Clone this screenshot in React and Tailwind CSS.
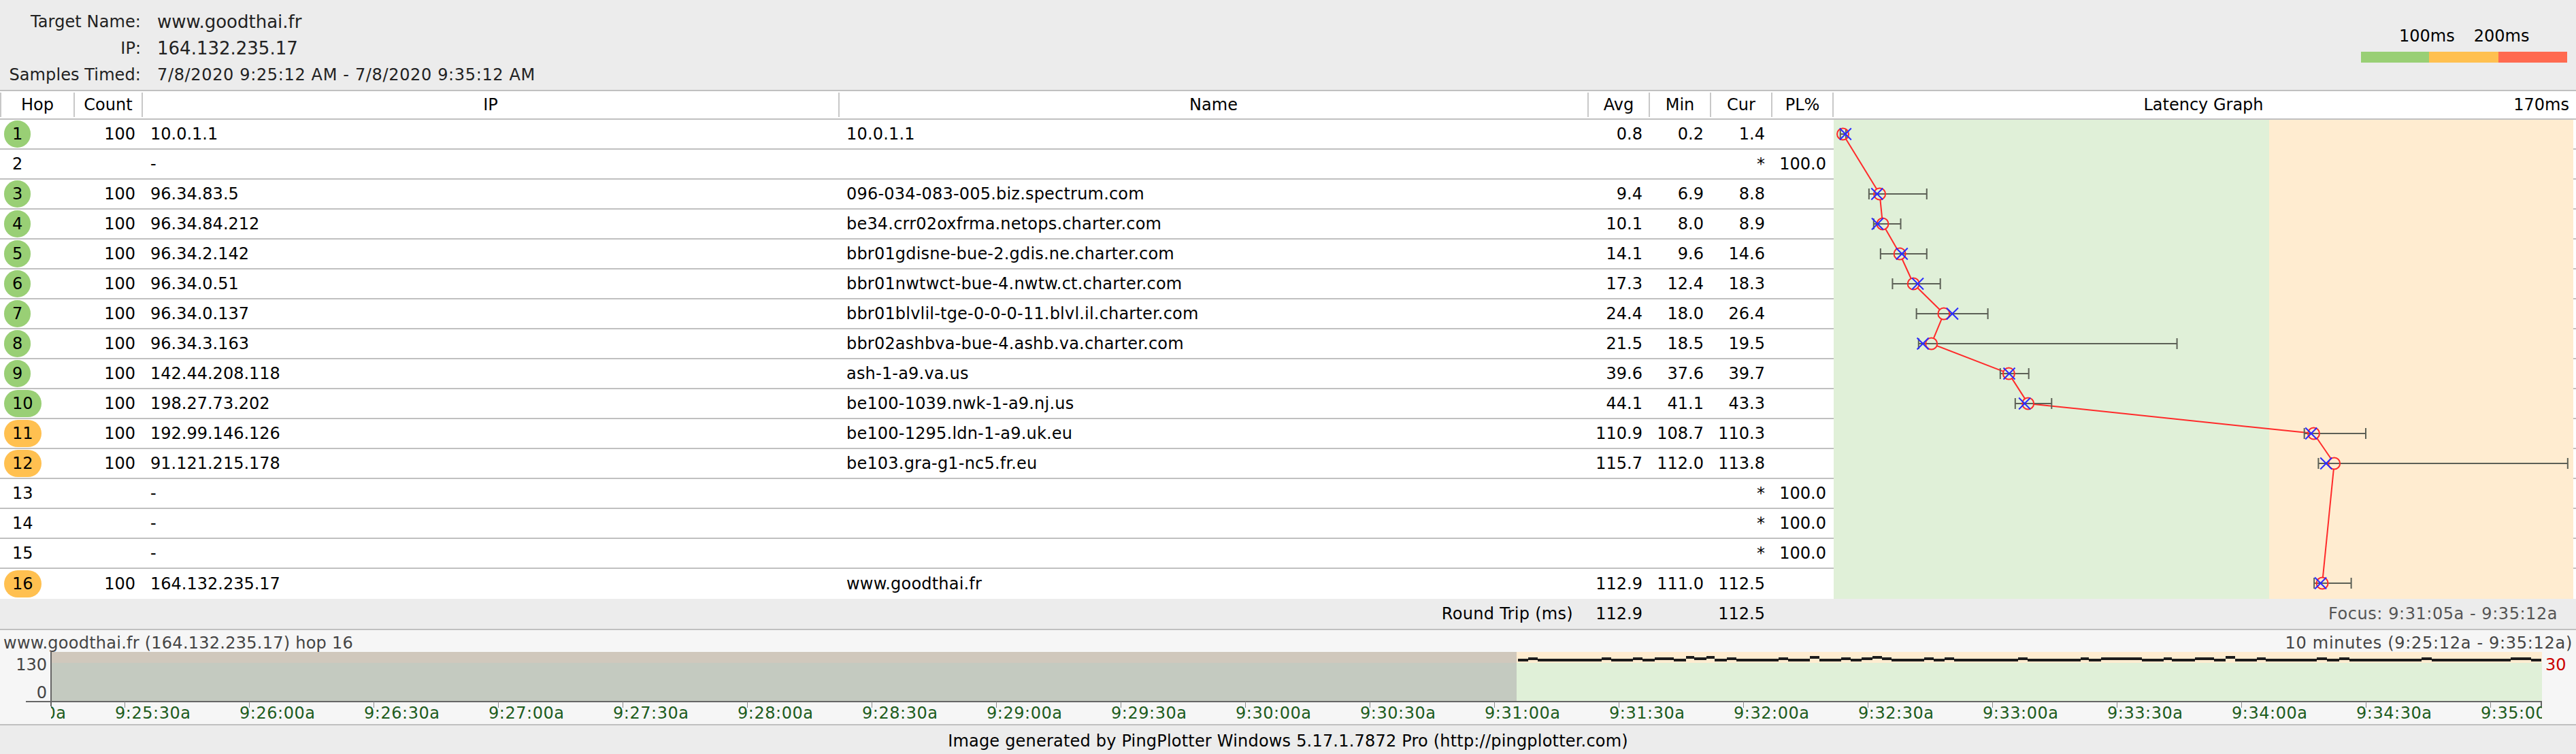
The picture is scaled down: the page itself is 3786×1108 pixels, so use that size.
import React from 'react';

const hops = [
    { hop: 1, count: 100, ip: '10.0.1.1', name: '10.0.1.1', avg: 0.8, min: 0.2, cur: 1.4, max: 1.5, tone: 'green' },
    { hop: 2, ip: '-', cur: '*', pl: '100.0' },
    { hop: 3, count: 100, ip: '96.34.83.5', name: '096-034-083-005.biz.spectrum.com', avg: 9.4, min: 6.9, cur: 8.8, max: 20.41, tone: 'green' },
    { hop: 4, count: 100, ip: '96.34.84.212', name: 'be34.crr02oxfrma.netops.charter.com', avg: 10.1, min: 8.0, cur: 8.9, max: 14.32, tone: 'green' },
    { hop: 5, count: 100, ip: '96.34.2.142', name: 'bbr01gdisne-bue-2.gdis.ne.charter.com', avg: 14.1, min: 9.6, cur: 14.6, max: 20.41, tone: 'green' },
    { hop: 6, count: 100, ip: '96.34.0.51', name: 'bbr01nwtwct-bue-4.nwtw.ct.charter.com', avg: 17.3, min: 12.4, cur: 18.3, max: 23.58, tone: 'green' },
    { hop: 7, count: 100, ip: '96.34.0.137', name: 'bbr01blvlil-tge-0-0-0-11.blvl.il.charter.com', avg: 24.4, min: 18.0, cur: 26.4, max: 34.7, tone: 'green' },
    { hop: 8, count: 100, ip: '96.34.3.163', name: 'bbr02ashbva-bue-4.ashb.va.charter.com', avg: 21.5, min: 18.5, cur: 19.5, max: 78.93, tone: 'green' },
    { hop: 9, count: 100, ip: '142.44.208.118', name: 'ash-1-a9.va.us', avg: 39.6, min: 37.6, cur: 39.7, max: 44.26, tone: 'green' },
    { hop: 10, count: 100, ip: '198.27.73.202', name: 'be100-1039.nwk-1-a9.nj.us', avg: 44.1, min: 41.1, cur: 43.3, max: 49.61, tone: 'green' },
    { hop: 11, count: 100, ip: '192.99.146.126', name: 'be100-1295.ldn-1-a9.uk.eu', avg: 110.9, min: 108.7, cur: 110.3, max: 123.07, tone: 'orange' },
    { hop: 12, count: 100, ip: '91.121.215.178', name: 'be103.gra-g1-nc5.fr.eu', avg: 115.7, min: 112.0, cur: 113.8, max: 170.3, tone: 'orange' },
    { hop: 13, ip: '-', cur: '*', pl: '100.0' },
    { hop: 14, ip: '-', cur: '*', pl: '100.0' },
    { hop: 15, ip: '-', cur: '*', pl: '100.0' },
    { hop: 16, count: 100, ip: '164.132.235.17', name: 'www.goodthai.fr', avg: 112.9, min: 111.0, cur: 112.5, max: 119.67, tone: 'orange' },
];

const timeLabels = [
    '9:25:00a', '9:25:30a', '9:26:00a', '9:26:30a', '9:27:00a', '9:27:30a', '9:28:00a',
    '9:28:30a', '9:29:00a', '9:29:30a', '9:30:00a', '9:30:30a', '9:31:00a', '9:31:30a',
    '9:32:00a', '9:32:30a', '9:33:00a', '9:33:30a', '9:34:00a', '9:34:30a', '9:35:00a',
];

// [x where the step ends, level]: 0 is the base line, 1 and 2 are the raised steps
const trace = [
    [2246, 0], [2260, 1], [2354, 0], [2368, 1], [2400, 0], [2414, 1], [2432, 0], [2460, 1], [2478, 0],
    [2490, 2], [2508, 1], [2520, 2], [2538, 0], [2552, 1], [2614, 0], [2628, 1], [2660, 0], [2674, 2],
    [2706, 0], [2720, 1], [2736, 0], [2752, 1], [2766, 2], [2780, 1], [2828, 0], [2842, 1], [2858, 0],
    [2872, 1], [2966, 0], [2980, 1], [3058, 0], [3070, 1], [3088, 0], [3148, 1], [3180, 0], [3192, 1],
    [3226, 0], [3254, 1], [3271, 0], [3285, 2], [3317, 0], [3330, 1], [3405, 0], [3420, 1], [3438, 0],
    [3453, 1], [3559, 0], [3574, 1], [3690, 0], [3720, 1], [3735, 0],
];

const tracePath = () => {
    let x = 2231;
    return trace
        .map(([end, level]) => {
            const part = `M${x} ${12 - level * 2}H${end}`;
            x = end;
            return part;
        })
        .join('');
};

const latencyX = (ms) => 8.5 + ms * 6.285;
const rowY = (hop) => 21 + (hop - 1) * 44;

function LatencyOverlay() {
    const points = hops.filter((h) => h.avg !== undefined);
    const r = 8.5;

    return (
        <svg className="absolute left-0 top-0" width="1091" height="704">
            {points.slice(1).map((p, i) => {
                const a = points[i];
                const x1 = latencyX(a.avg);
                const y1 = rowY(a.hop);
                const x2 = latencyX(p.avg);
                const y2 = rowY(p.hop);
                const len = Math.hypot(x2 - x1, y2 - y1);
                const ux = (x2 - x1) / len;
                const uy = (y2 - y1) / len;
                return (
                    <line
                        key={p.hop}
                        x1={x1 + ux * r}
                        y1={y1 + uy * r}
                        x2={x2 - ux * r}
                        y2={y2 - uy * r}
                        stroke="#ff2a2a"
                        strokeWidth="2"
                    />
                );
            })}
            {points.map((p) => {
                const y = rowY(p.hop);
                const min = latencyX(p.min);
                const max = latencyX(p.max);
                const cur = latencyX(p.cur);
                return (
                    <g key={p.hop} fill="none">
                        <path d={`M${min} ${y}H${max}M${min} ${y - 8}V${y + 8}M${max} ${y - 8}V${y + 8}`} stroke="#5c6056" strokeWidth="2" />
                        <circle cx={latencyX(p.avg)} cy={y} r={r} stroke="#ff2a2a" strokeWidth="2" />
                        <path d={`M${cur - 8.5} ${y - 8.5}L${cur + 8.5} ${y + 8.5}M${cur + 8.5} ${y - 8.5}L${cur - 8.5} ${y + 8.5}`} stroke="#2a2aff" strokeWidth="2" />
                    </g>
                );
            })}
        </svg>
    );
}

function TimelineChart() {
    return (
        <svg className="block" width="3786" height="106">
            <defs>
                <clipPath id="plot-clip">
                    <rect x="75" y="0" width="3661" height="106" />
                </clipPath>
            </defs>
            <rect x="75" y="0" width="3661" height="16" fill="#ffecd0" />
            <rect x="75" y="16" width="3661" height="56" fill="#e0f0d8" />
            <rect x="75" y="0" width="2154" height="16" fill="#d0c8bc" />
            <rect x="75" y="16" width="2154" height="56" fill="#c4cac0" />
            <path d={tracePath()} fill="none" stroke="#1c1c1c" strokeWidth="4" />
            <path d="M75 0V80M3735 72V80" fill="none" stroke="#666666" strokeWidth="2" />
            <path d="M38 73H3736" fill="none" stroke="#666666" strokeWidth="2" />
            {timeLabels.map((label, i) => (
                <path key={label} d={`M${183 * i + 0.5} 73V82`} stroke="#8a8a8a" strokeWidth="1" clipPath="url(#plot-clip)" />
            ))}
            <g clipPath="url(#plot-clip)" fill="#1d5c1d" fontSize="24">
                {timeLabels.map((label, i) => (
                    <text key={label} x={183 * i - 14} y="98" letterSpacing="0.55">
                        {label}
                    </text>
                ))}
            </g>
            <text x="69" y="27" textAnchor="end" fontSize="24" fill="#444444">130</text>
            <text x="69" y="68" textAnchor="end" fontSize="24" fill="#444444">0</text>
            <text x="3741" y="27" fontSize="24" fill="#cc0000">30</text>
        </svg>
    );
}

function HeaderCell({ className, children }) {
    return (
        <div className={`flex h-[36px] items-center justify-center border-r-2 border-[#c8c8c8] ${className}`}>
            {children}
        </div>
    );
}

function HopBadge({ hop, tone }) {
    const bg = tone === 'green' ? 'bg-[#99cf75]' : tone === 'orange' ? 'bg-[#ffc050]' : '';
    return <span className={`ml-[6px] flex h-[40px] items-center rounded-full px-[12px] ${bg}`}>{hop}</span>;
}

function HopRow({ row, last }) {
    const line = last ? '' : 'border-b-2 border-[#c0c0c0]';
    return (
        <div className="flex h-[44px]">
            <div className={`flex w-[2695px] items-center ${line}`}>
                <div className="w-[110px]">
                    <div className="flex">
                        <HopBadge hop={row.hop} tone={row.tone} />
                    </div>
                </div>
                <div className="w-[100px] pr-[11px] text-right">{row.count}</div>
                <div className="w-[1023px] pl-[11px]">{row.ip}</div>
                <div className="w-[1102px] pl-[11px] tracking-[0.2px]">{row.name}</div>
                <div className="w-[90px] pr-[11px] text-right">{row.avg?.toFixed(1)}</div>
                <div className="w-[90px] pr-[11px] text-right">{row.min?.toFixed(1)}</div>
                <div className="w-[90px] pr-[11px] text-right">{typeof row.cur === 'number' ? row.cur.toFixed(1) : row.cur}</div>
                <div className="w-[90px] pr-[11px] text-right">{row.pl}</div>
            </div>
            <div className="w-[640px] bg-[#e0f0d8]" />
            <div className="w-[447px] bg-[#ffecd0]" />
            <div className={`w-[4px] ${line}`} />
        </div>
    );
}

export default function App() {
    return (
        <div className="flex h-[1108px] w-[3786px] flex-col overflow-hidden bg-white font-['DejaVu_Sans',sans-serif] text-[24px] leading-[30px] text-black">
            <div className="flex h-[134px] justify-between border-b-2 border-[#c0c0c0] bg-[#ececec]">
                <div className="grid grid-cols-[207px_auto] auto-rows-[39px] items-center gap-x-[24px] pt-[12px] text-[#222222]">
                    <div className="text-right tracking-[0.1px]">Target Name:</div>
                    <div className="text-[26px]">www.goodthai.fr</div>
                    <div className="text-right">IP:</div>
                    <div className="text-[26px]">164.132.235.17</div>
                    <div className="whitespace-nowrap text-right tracking-[0.1px]">Samples Timed:</div>
                    <div className="tracking-[0.65px]">7/8/2020 9:25:12 AM - 7/8/2020 9:35:12 AM</div>
                </div>
                <div className="mr-[13px] mt-[38px] w-[303px]">
                    <div className="flex gap-[28px] pl-[56px]">
                        <span>100ms</span>
                        <span>200ms</span>
                    </div>
                    <div className="mt-[8px] flex h-[16px]">
                        <div className="w-[100px] bg-[#99cf75]" />
                        <div className="w-[102px] bg-[#ffc050]" />
                        <div className="w-[101px] bg-[#ff6a50]" />
                    </div>
                </div>
            </div>

            <div className="flex h-[42px] items-start border-b-2 border-[#c0c0c0] pt-[2px]">
                <HeaderCell className="w-[110px] border-l-2">Hop</HeaderCell>
                <HeaderCell className="w-[100px]">Count</HeaderCell>
                <HeaderCell className="w-[1024px]">IP</HeaderCell>
                <HeaderCell className="w-[1101px]">Name</HeaderCell>
                <HeaderCell className="w-[90px]">Avg</HeaderCell>
                <HeaderCell className="w-[90px]">Min</HeaderCell>
                <HeaderCell className="w-[90px]">Cur</HeaderCell>
                <HeaderCell className="w-[90px]">PL%</HeaderCell>
                <div className="grid h-[36px] w-[1087px] grid-cols-[1fr_auto_1fr] items-center">
                    <span />
                    <span>Latency Graph</span>
                    <span className="pr-[6px] text-right">170ms</span>
                </div>
            </div>

            <div className="relative">
                {hops.map((row, i) => (
                    <HopRow key={row.hop} row={row} last={i === hops.length - 1} />
                ))}
                <div className="absolute left-[2695px] top-0">
                    <LatencyOverlay />
                </div>
            </div>

            <div className="flex h-[46px] items-center border-b-2 border-[#c0c0c0] bg-[#ececec]">
                <div className="w-[2335px] pr-[23px] text-right tracking-[0.3px]">Round Trip (ms)</div>
                <div className="w-[90px] pr-[11px] text-right">112.9</div>
                <div className="w-[90px]" />
                <div className="w-[90px] pr-[11px] text-right">112.5</div>
                <div className="flex-1 pr-[27px] text-right tracking-[0.55px] text-[#555555]">Focus: 9:31:05a - 9:35:12a</div>
            </div>

            <div className="h-[140px] border-b-2 border-[#c0c0c0] bg-[#f6f6f6]">
                <div className="flex h-[32px] justify-between px-[5px] pt-[4px] text-[#444444]">
                    <span className="tracking-[0.25px]">www.goodthai.fr (164.132.235.17) hop 16</span>
                    <span className="tracking-[0.7px]">10 minutes (9:25:12a - 9:35:12a)</span>
                </div>
                <TimelineChart />
            </div>

            <div className="flex h-[42px] items-center justify-center bg-[#ececec] pt-[4px] tracking-[0.2px]">
                Image generated by PingPlotter Windows 5.17.1.7872 Pro (http://pingplotter.com)
            </div>
        </div>
    );
}
